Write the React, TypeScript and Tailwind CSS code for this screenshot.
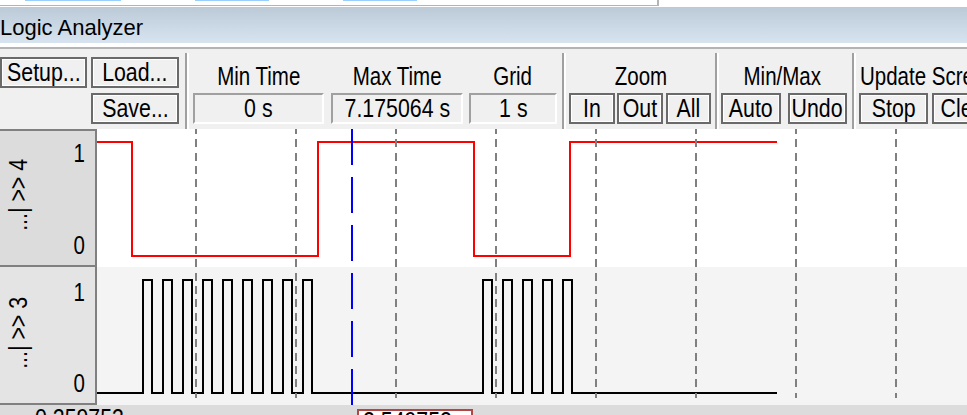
import React from "react";

function T({ className = "origin-center", children }: { className?: string; children: React.ReactNode }) {
  return <span className={`inline-block whitespace-nowrap scale-x-[0.82] ${className}`}>{children}</span>;
}

function Btn({ className, children }: { className: string; children: React.ReactNode }) {
  return (
    <div
      className={`h-[31px] shrink-0 border-2 border-[#6a6a6a] bg-[#f0f0f0] shadow-[inset_1px_1px_0_#ffffff,inset_-1px_-1px_0_#ffffff] flex items-center justify-center text-[26px] leading-[27px] text-black whitespace-nowrap ${className}`}
    >
      <T>{children}</T>
    </div>
  );
}

function Val({ className, children }: { className: string; children: React.ReactNode }) {
  return (
    <div
      className={`h-[31px] shrink-0 border-2 border-t-[#a0a0a0] border-l-[#a0a0a0] border-r-white border-b-white bg-[#f0f0f0] flex items-center justify-center text-[26px] leading-[27px] text-black whitespace-nowrap ${className}`}
    >
      <T>{children}</T>
    </div>
  );
}

function Label({
  className = "",
  origin = "origin-center",
  children,
}: {
  className?: string;
  origin?: string;
  children: React.ReactNode;
}) {
  return (
    <div className={`mt-[13px] h-[28px] text-[25px] leading-[28px] whitespace-nowrap text-black ${className}`}>
      <T className={origin}>{children}</T>
    </div>
  );
}

function Sep() {
  return (
    <div className="flex mt-[4px] shrink-0">
      <div className="w-[2px] bg-[#a0a0a0]" />
      <div className="w-[2px] bg-white" />
    </div>
  );
}

function SignalPanel({ label, top }: { label: string; top: boolean }) {
  return (
    <div
      className={
        top
          ? "h-[138px] border-t-2 border-b-2 border-r-2 border-[#808080] bg-[#dcdcdc] flex"
          : "h-[138px] border-b-2 border-r-2 border-[#808080] bg-[#e4e4e4] flex"
      }
    >
      <div className={top ? "pl-[5px] pb-[7px] flex items-center" : "pl-[5px] pb-[5px] flex items-center"}>
        <div className="[writing-mode:vertical-rl] rotate-180 scale-y-[0.82] text-[26px] leading-[26px] whitespace-nowrap text-black">
          {label}
        </div>
      </div>
      <div className="flex-1" />
      <div
        className={
          top
            ? "pr-[10px] pt-[9px] pb-[7px] flex flex-col justify-between items-end text-[25px] leading-[26px] text-black"
            : "pr-[10px] pt-[12px] pb-[7px] flex flex-col justify-between items-end text-[25px] leading-[26px] text-black"
        }
      >
        <T className="origin-right">1</T>
        <T className="origin-right">0</T>
      </div>
    </div>
  );
}

function blackPoints(): string {
  const pts: string[] = ["0,126"];
  const bursts = [
    { start: 46, n: 9 },
    { start: 386, n: 5 },
  ];
  for (const b of bursts) {
    for (let i = 0; i < b.n; i++) {
      const r = b.start + i * 20;
      const f = r + 9;
      pts.push(`${r},126`, `${r},13`, `${f},13`, `${f},126`);
    }
  }
  pts.push("680,126");
  return pts.join(" ");
}

export default function App() {
  const gridXs = [99, 199, 299, 399, 499, 599, 699, 799];
  return (
    <div className="w-[967px] h-[415px] overflow-hidden bg-white flex flex-col [font-family:'Liberation_Sans',Arial,sans-serif]">
      {/* top strip */}
      <div className="h-[7px] shrink-0 bg-white">
        <div className="w-[659px] h-[6px] border-b border-r-2 border-[#b4b4b4] flex items-start">
          <div className="ml-[25px] w-[96px] h-[1px] bg-[#99cfff]" />
          <div className="ml-[74px] w-[74px] h-[1px] bg-[#99cfff]" />
          <div className="ml-[74px] w-[74px] h-[1px] bg-[#99cfff]" />
        </div>
      </div>

      {/* title bar */}
      <div className="h-[36px] shrink-0 bg-linear-to-b from-[#bccad8] to-[#d7e4f0]">
        <div className="pt-[10px] text-[22px] leading-[22px] text-black whitespace-nowrap">Logic Analyzer</div>
      </div>
      <div className="h-[4px] shrink-0 bg-white" />
      <div className="h-[2px] shrink-0 bg-[#b4b4b4]" />

      {/* toolbar */}
      <div className="h-[80px] shrink-0 bg-[#f0f0f0] flex">
        <div className="w-[185px] shrink-0 pt-[8px]">
          <div className="flex">
            <Btn className="w-[87px]">Setup...</Btn>
            <Btn className="ml-[4px] w-[88px]">Load...</Btn>
          </div>
          <div className="flex mt-[5px]">
            <Btn className="ml-[91px] w-[88px]">Save...</Btn>
          </div>
        </div>
        <Sep />
        <div className="w-[373px] shrink-0 flex">
          <div className="ml-[4px] w-[131px] flex flex-col items-center">
            <Label>Min Time</Label>
            <Val className="mt-[3px] w-[131px]">0 s</Val>
          </div>
          <div className="ml-[7px] w-[132px] flex flex-col items-center">
            <Label>Max Time</Label>
            <Val className="mt-[3px] w-[132px]">7.175064 s</Val>
          </div>
          <div className="ml-[6px] w-[88px] flex flex-col items-center">
            <Label>Grid</Label>
            <Val className="mt-[3px] w-[88px]">1 s</Val>
          </div>
        </div>
        <Sep />
        <div className="w-[149px] shrink-0 flex flex-col">
          <Label className="self-center">Zoom</Label>
          <div className="mt-[3px] flex">
            <Btn className="ml-[3px] w-[46px]">In</Btn>
            <Btn className="ml-[2px] w-[46px]">Out</Btn>
            <Btn className="ml-[3px] w-[45px]">All</Btn>
          </div>
        </div>
        <Sep />
        <div className="w-[133px] shrink-0 flex flex-col">
          <Label className="ml-[16px]">Min/Max</Label>
          <div className="mt-[3px] flex">
            <Btn className="ml-[2px] w-[60px]">Auto</Btn>
            <Btn className="ml-[7px] w-[59px]">Undo</Btn>
          </div>
        </div>
        <Sep />
        <div className="flex-1 min-w-0 flex flex-col overflow-hidden">
          <Label className="ml-[4px]" origin="origin-left">
            Update Screen
          </Label>
          <div className="mt-[3px] flex">
            <Btn className="ml-[3px] w-[69px]">Stop</Btn>
            <Btn className="ml-[4px] w-[69px]">Clear</Btn>
          </div>
        </div>
      </div>

      {/* waveform section */}
      <div className="h-[276px] shrink-0 flex">
        <div className="w-[97px] shrink-0 flex flex-col">
          <SignalPanel label="...| >> 4" top={true} />
          <SignalPanel label="...| >> 3" top={false} />
        </div>
        <div className="relative w-[870px] shrink-0 flex flex-col">
          <div className="h-[138px] bg-white">
            <svg width="870" height="138" className="block" shapeRendering="crispEdges">
              <polyline
                points="0,13 35,13 35,127 221,127 221,13 377,13 377,127 473,127 473,13 680,13"
                fill="none"
                stroke="#ff0000"
                strokeWidth="2"
              />
            </svg>
          </div>
          <div className="h-[138px] bg-[#f4f4f4]">
            <svg width="870" height="138" className="block" shapeRendering="crispEdges">
              <polyline points={blackPoints()} fill="none" stroke="#000000" strokeWidth="2" />
            </svg>
          </div>
          <svg
            width="870"
            height="276"
            className="absolute inset-0 pointer-events-none"
            shapeRendering="crispEdges"
          >
            {gridXs.map((x) => (
              <line
                key={x}
                x1={x}
                x2={x}
                y1={-3}
                y2={269.3}
                stroke="#808080"
                strokeWidth="2"
                strokeDasharray="8 5.33"
              />
            ))}
            <line x1={255} x2={255} y1={0} y2={276} stroke="#0000ff" strokeWidth="2" strokeDasharray="35.5 12.5" />
          </svg>
        </div>
      </div>

      {/* bottom strip */}
      <div className="h-[10px] shrink-0 bg-[#dcdcdc] flex items-start overflow-hidden">
        <div className="w-[357px] shrink-0 pl-[35px] text-[26px] leading-[26px] text-black whitespace-nowrap">
          <T className="origin-left">0.259753</T>
        </div>
        <div className="mt-[4px] w-[116px] h-[30px] shrink-0 border-2 border-[#b04848] bg-white pl-[4px] text-[26px] leading-[26px] text-black whitespace-nowrap">
          <div className="-mt-[3px]">
            <T className="origin-left">2.549753</T>
          </div>
        </div>
      </div>
    </div>
  );
}
